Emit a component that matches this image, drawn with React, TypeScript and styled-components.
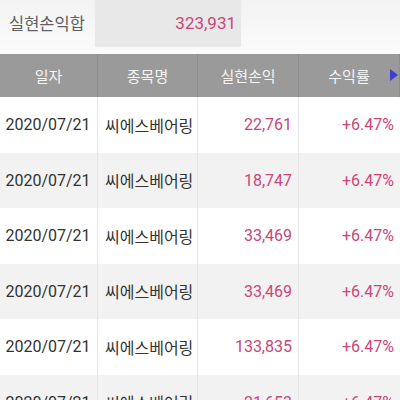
import React from "react"
import styled, { createGlobalStyle } from "styled-components"

const GlobalStyle = createGlobalStyle`
  html, body {
    margin: 0;
    padding: 0;
    background: #ffffff;
    font-family: Roboto, "Noto Sans CJK KR", sans-serif;
  }
`

const Page = styled.div`
  width: 400px;
  height: 400px;
  overflow: hidden;
  background: #ffffff;
`

const SummaryBar = styled.div`
  height: 54px;
  display: flex;
  align-items: flex-start;
  background: linear-gradient(#f3f3f3, #fbfbfb);
`

const SummaryLabel = styled.div`
  width: 95px;
  height: 46px;
  display: flex;
  align-items: center;
  padding-left: 9px;
  box-sizing: border-box;
  font-size: 16.5px;
  color: #5f5f5f;
`

const SummaryValue = styled.div`
  width: 146px;
  height: 46px;
  display: flex;
  align-items: center;
  justify-content: flex-end;
  padding-right: 5px;
  box-sizing: border-box;
  background: #e8e8e8;
  box-shadow: 0 1px 1px rgba(0, 0, 0, 0.06);
  font-size: 17px;
  color: #c9467a;
`

const Grid = styled.div`
  display: grid;
  grid-template-columns: 98px 100px 101px 101px;
`

const HeadCell = styled.div`
  height: 43px;
  display: flex;
  align-items: center;
  justify-content: center;
  position: relative;
  background: #9a9a9a;
  border-right: 1px solid #8e8e8e;
  font-size: 15px;
  color: #f4f4f4;
  &:last-child {
    border-right: none;
  }
`

const Arrow = styled.span`
  position: absolute;
  right: 1px;
  top: 15px;
  width: 0;
  height: 0;
  border-top: 6px solid transparent;
  border-bottom: 6px solid transparent;
  border-left: 8px solid #3b3fd0;
`

const Cell = styled.div<{ $shade: boolean; $align: "left" | "right" | "center"; $accent?: boolean }>`
  height: 55.5px;
  display: flex;
  align-items: center;
  justify-content: ${(p) =>
    p.$align === "left" ? "flex-start" : p.$align === "right" ? "flex-end" : "center"};
  padding: 0 ${(p) => (p.$align === "right" ? "6px" : "5px")} 0 ${(p) => (p.$align === "left" ? "7px" : "4px")};
  box-sizing: border-box;
  background: ${(p) => (p.$shade ? "#f2f2f2" : "#ffffff")};
  border-right: 1px solid #e6e6e6;
  font-size: 16px;
  color: ${(p) => (p.$accent ? "#c9467a" : "#333333")};
  white-space: nowrap;
  &:nth-child(4n) {
    border-right: none;
  }
`

const rows = [
  { date: "2020/07/21", name: "씨에스베어링", pnl: "22,761", rate: "+6.47%" },
  { date: "2020/07/21", name: "씨에스베어링", pnl: "18,747", rate: "+6.47%" },
  { date: "2020/07/21", name: "씨에스베어링", pnl: "33,469", rate: "+6.47%" },
  { date: "2020/07/21", name: "씨에스베어링", pnl: "33,469", rate: "+6.47%" },
  { date: "2020/07/21", name: "씨에스베어링", pnl: "133,835", rate: "+6.47%" },
  { date: "2020/07/21", name: "씨에스베어링", pnl: "21,653", rate: "+6.47%" },
]

const App = () => {
  return (
    <Page>
      <GlobalStyle />
      <SummaryBar>
        <SummaryLabel>실현손익합</SummaryLabel>
        <SummaryValue>323,931</SummaryValue>
      </SummaryBar>
      <Grid>
        <HeadCell>일자</HeadCell>
        <HeadCell>종목명</HeadCell>
        <HeadCell>실현손익</HeadCell>
        <HeadCell>
          수익률
          <Arrow />
        </HeadCell>
        {rows.map((r, i) => {
          const shade = i % 2 === 1
          return (
            <React.Fragment key={i}>
              <Cell $shade={shade} $align="center">{r.date}</Cell>
              <Cell $shade={shade} $align="left">{r.name}</Cell>
              <Cell $shade={shade} $align="right" $accent>{r.pnl}</Cell>
              <Cell $shade={shade} $align="right" $accent>{r.rate}</Cell>
            </React.Fragment>
          )
        })}
      </Grid>
    </Page>
  )
}

export default App
